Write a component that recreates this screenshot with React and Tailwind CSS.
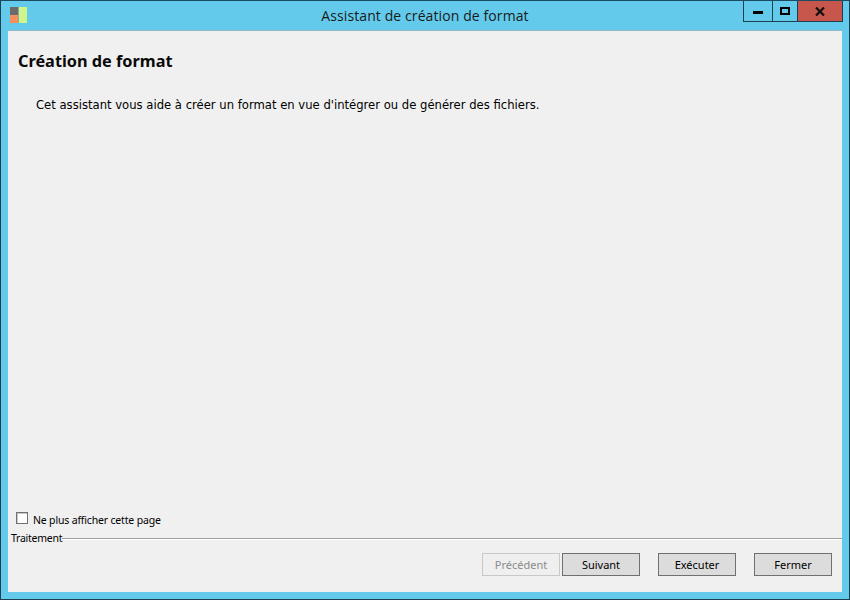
export default function App() {
  const btn = "w-[78px] h-[23px] border text-[11px] leading-none flex items-center justify-center font-['Noto_Sans',sans-serif]";
  return (
    <div className="w-[850px] h-[600px] bg-[#63caec] border border-[#1c3f52] border-t-[#1c4a60] flex flex-col font-['Noto_Sans',sans-serif] overflow-hidden text-black">
      <div className="h-[29px] shrink-0 grid grid-cols-[1fr_auto_1fr] items-start">
        <div className="pl-[9px] pt-[6px]">
          <svg width="17" height="17" viewBox="0 0 17 17" className="block">
            <rect x="0" y="0" width="8" height="8" fill="#6b6b6b" />
            <rect x="0" y="8" width="8" height="8" fill="#f58f5c" />
            <rect x="9" y="0" width="8" height="16" fill="#cdf58c" />
            <rect x="8" y="0" width="1" height="16" fill="#8aa8a8" />
          </svg>
        </div>
        <div className="text-[14px] leading-[30px] text-[#1a1a1a] font-['Open_Sans',sans-serif] tracking-[0.1px]">Assistant de création de format</div>
        <div className="flex justify-end pr-[6px]">
          <div className="w-[29px] h-[21px] border border-t-0 border-r-0 border-[#1c3f52] flex items-center justify-center">
            <div className="w-[10px] h-[3px] bg-black mt-[3px]" />
          </div>
          <div className="w-[25px] h-[21px] border border-t-0 border-r-0 border-[#1c3f52] flex items-center justify-center">
            <div className="w-[10px] h-[8px] border-2 border-black -mt-[1px]" />
          </div>
          <div className="w-[46px] h-[21px] border border-t-0 border-l border-[#1c3f52] bg-[#c7574c] flex items-center justify-center">
            <svg width="10" height="9" viewBox="0 0 10 9"><path d="M1 0.5 L9 8.5 M9 0.5 L1 8.5" stroke="#111" strokeWidth="2.2" /></svg>
          </div>
        </div>
      </div>
      <div className="mx-[7px] mb-[7px] flex-1 bg-[#f0f0f0] border-t border-[#8fb9c9] flex flex-col font-['DejaVu_Sans',sans-serif]">
        <h1 className="pl-[10px] pt-[19px] text-[16.3px] leading-[22px] font-bold font-['Noto_Sans',sans-serif] text-[#0a0a0a]">Création de format</h1>
        <p className="pl-[28px] pt-[25px] text-[11.62px] leading-[16px]">Cet assistant vous aide à créer un format en vue d'intégrer ou de générer des fichiers.</p>
        <div className="flex-1" />
        <label className="pl-[8px] flex items-center gap-[5px] h-[16px] text-[10.5px] leading-none font-['Noto_Sans',sans-serif] -translate-y-[1px]">
          <span className="w-[12px] h-[12px] border border-[#707070] bg-white -mt-[4px] shadow-[inset_1px_1px_0_#c8c8c8]" />
          <span className="tracking-[-0.17px]">Ne plus afficher cette page</span>
        </label>
        <div className="mt-[5px] flex items-center h-[10px]">
          <span className="pl-[3px] text-[10.5px] leading-none font-['Noto_Sans',sans-serif] -translate-y-px tracking-[-0.25px]">Traitement</span>
          <div className="flex-1 border-t border-[#a0a0a0] bg-white h-[2px]" />
        </div>
        <div className="pt-[9px] pr-[10px] pb-[16px] flex justify-end">
          <div className={btn + " bg-[#efefef] border-[#c8c8c8] text-[#8a8a8a]"}>Précédent</div>
          <div className={btn + " ml-[2px] bg-[#dcdcdc] border-[#707070]"}>Suivant</div>
          <div className={btn + " ml-[18px] bg-[#dcdcdc] border-[#707070]"}>Exécuter</div>
          <div className={btn + " ml-[18px] bg-[#dcdcdc] border-[#707070]"}>Fermer</div>
        </div>
      </div>
    </div>
  );
}
